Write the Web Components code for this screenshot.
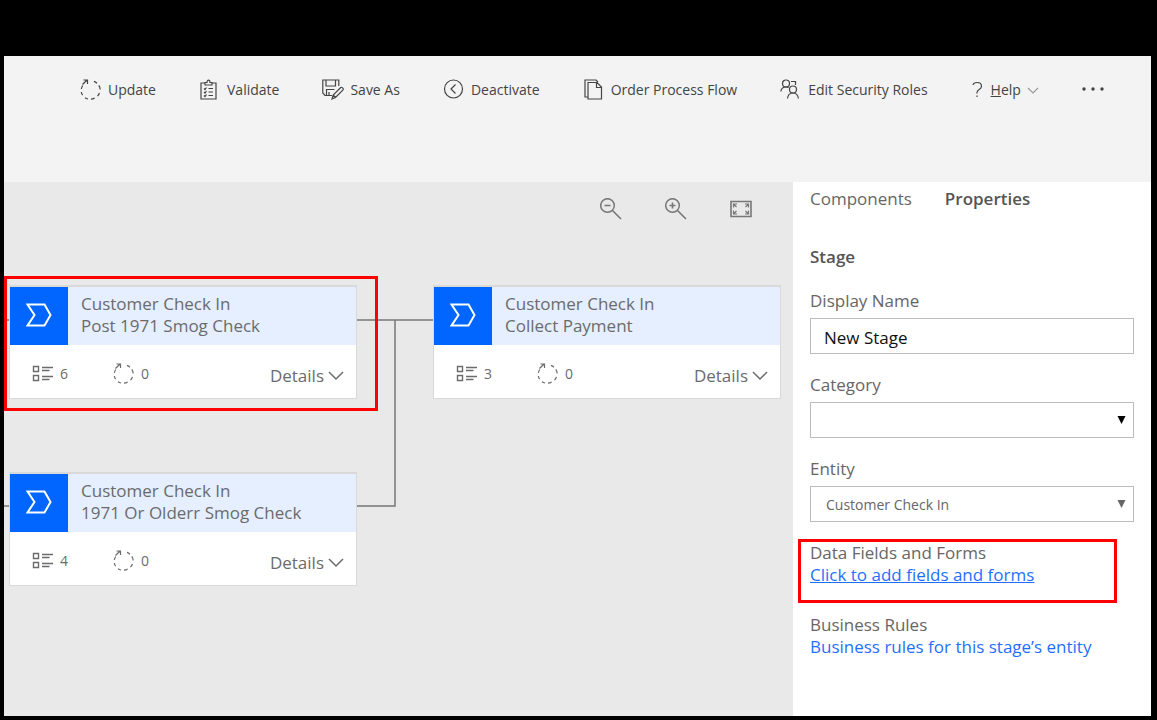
<!DOCTYPE html>
<html lang="en">
<head>
<meta charset="utf-8">
<title>Business process flow designer</title>
<style>
  html, body { margin: 0; height: 100%; }
  body { background: #000; font-family: "Open Sans", "Noto Sans", sans-serif; color: #666; }
</style>
</head>
<body>
<flow-designer>
  <command-bar slot="commands">
    <command-button icon="update">Update</command-button>
    <command-button icon="validate">Validate</command-button>
    <command-button icon="saveas">Save As</command-button>
    <command-button icon="deactivate">Deactivate</command-button>
    <command-button icon="order">Order Process Flow</command-button>
    <command-button icon="roles">Edit Security Roles</command-button>
    <command-button icon="help" menu><u>H</u>elp</command-button>
    <command-button icon="more" label="More commands"></command-button>
  </command-bar>
  <flow-canvas slot="canvas">
    <stage-card style="--x:5px;--y:103px" fields="6" flows="0"><span>Customer Check In</span><span slot="name">Post 1971 Smog Check</span></stage-card>
    <stage-card style="--x:429px;--y:103px" fields="3" flows="0"><span>Customer Check In</span><span slot="name">Collect Payment</span></stage-card>
    <stage-card style="--x:5px;--y:290px" fields="4" flows="0"><span>Customer Check In</span><span slot="name">1971 Or Olderr Smog Check</span></stage-card>
  </flow-canvas>
  <properties-panel slot="panel">
    <form-field label="Display Name" value="New Stage"></form-field>
    <form-field label="Category" type="select" value=""></form-field>
    <form-field label="Entity" type="select" value="Customer Check In" muted></form-field>
    <link-group heading="Data Fields and Forms" highlighted>Click to add fields and forms</link-group>
    <link-group heading="Business Rules">Business rules for this stage’s entity</link-group>
  </properties-panel>
</flow-designer>

<script>
const ICONS = {
  update: [22, 22, '<path d="M2.800 6.500C2 7.600 1.500 9 1.300 10M1.300 13c.2 1.200.7 2.300 1.300 3.200M5 18.700c1 .7 2 1.100 3 1.300M11 20.200c1.300-.1 2.500-.5 3.600-1.100M17.500 17.200c.9-1 1.600-2.200 1.900-3.400M20.200 10.500c-.1-1.500-.6-2.900-1.400-4.100M17 4.300c-1-.9-2-1.500-3-1.900M2.500 5.500L7 1M3.500 1H7.500v4"/>'],
  validate: [22, 22, '<path d="M6 4H2v16h15V4h-4M6 6V3.500h2C8 2 8.600 1.200 9.500 1.200S11 2 11 3.500h2V6zM5 9.500l1 1 1.500-2M5 13l1 1 1.500-2M5 16.500l1 1 1.500-2M9.500 9.500H14M9.500 13H14M9.500 16.500H14"/>'],
  saveas: [22, 22, '<path d="M10 16.500H3L.8 14V1h16v6M4 1v6h9.500V1M4.500 16v-5.500h8M7 13v3.500M10 20l1.200-4 7.500-7.500c1-.8 3.200 1 2.300 2.300L13.500 18.500zM11.200 16l2.300 2.500"/>'],
  deactivate: [22, 22, '<circle cx="10.500" cy="10" r="9"/><path d="M12.500 5.500L8 10l4.500 4.500"/>'],
  order: [22, 22, '<path d="M5 18H2V1h11l2 2M5 3.500h9l4.500 4.500v12H5zM13.500 3.500v5h5"/>'],
  roles: [22, 22, '<circle cx="6" cy="4.500" r="3.500"/><path d="M.8 12.500C1.200 9.800 3.300 8 6 8c1 0 1.800.2 2.600.7M11 2.500h4.500V6"/><circle cx="13" cy="10.500" r="3.500"/><path d="M7.500 19.500c.3-3.300 2.500-5.500 5.500-5.500s5 2.200 5.400 5.500"/>'],
  help: [14, 22, '<path d="M2 6C2.300 4.500 3.800 3.500 6 3.500c2.700 0 4.500 1.300 4.500 3.700 0 3.300-4.500 3.300-4.500 6.300v1"/><path d="M6 16.500v1.500"/>'],
  more: [22, 22, '<g fill="currentColor" stroke="none"><circle cx="2" cy="10" r="1.700"/><circle cx="11" cy="10" r="1.700"/><circle cx="20" cy="10" r="1.700"/></g>'],
  chevsmall: [12, 12, '<path d="M1 4l5 5 5-5"/>'],
  chev: [16, 16, '<path d="M1 4l7 7 7-7" stroke-width="1.500"/>'],
  zoomout: [22, 22, '<circle cx="7.500" cy="7.500" r="6.800" stroke-width="1.500"/><path d="M4.500 7.500h6M12.500 12.500l8.500 8.500" stroke-width="1.600"/>'],
  zoomin: [22, 22, '<circle cx="7.500" cy="7.500" r="6.800" stroke-width="1.500"/><path d="M4.500 7.500h6M7.500 4.500v6M12.500 12.500l8.500 8.500" stroke-width="1.600"/>'],
  fit: [22, 22, '<path d="M1 3.500h20v15H1z" stroke-width="1.600"/><path d="M3.500 9.500V6H7M3.500 6l3 3M18.500 9.500V6H15M18.500 6l-3 3M3.500 12.500V16H7M3.500 16l3-3M18.500 12.500V16H15M18.500 16l-3-3"/>'],
  stage: [26, 24, '<path d="M1.500 1.500h17L24.500 12l-6 10.500h-17L8.500 12z" stroke-width="2"/>'],
  fields: [22, 18, '<path d="M1.500 1.500h5v5h-5zM1.500 10.500h5v5h-5zM10 2.500h11M10 5.500h7.500M10 11.500h11M10 14.500h7.500" stroke-width="1.400"/>'],
};

const define = (name, css, html) => {
  customElements.define(name, class extends HTMLElement {
    constructor() {
      super();
      const root = this.attachShadow({ mode: 'open' });
      const t = document.createElement('template');
      t.innerHTML = `<style>*{box-sizing:border-box}button{font:inherit;color:inherit;background:none;border:0;padding:0;margin:0}${css}</style>` +
        (typeof html === 'function' ? html(this) : html);
      root.append(t.content.cloneNode(true));
    }
  });
};

define('line-icon', ':host{display:block;flex:none}svg{display:block}', el => {
  const [w, h, body] = ICONS[el.getAttribute('name')];
  return `<svg width="${w}" height="${h}" viewBox="0 0 ${w} ${h}" fill="none" stroke="currentColor" stroke-width="1.200" aria-hidden="true">${body}</svg>`;
});

define('command-button', `
  :host{display:block}
  button{display:flex;align-items:center;gap:6px;height:32px;font-size:14px;line-height:20px;color:#444;white-space:nowrap}
  .chev{color:#999}`,
  el => `<button type="button" ${el.getAttribute('label') ? `aria-label="${el.getAttribute('label')}"` : ''}>
    <line-icon name="${el.getAttribute('icon')}"></line-icon>${el.getAttribute('label') ? '' : '<span><slot></slot></span>'}
    ${el.hasAttribute('menu') ? '<line-icon class="chev" name="chevsmall"></line-icon>' : ''}</button>`);

define('command-bar', `
  :host{display:block;background:#f3f3f3;height:126px;box-sizing:border-box;padding:18px 47px 0 76px}
  div{display:flex;justify-content:space-between}`,
  '<div role="toolbar" aria-label="Commands"><slot></slot></div>');

define('stage-card', `
  :host{display:flex;flex-direction:column;position:absolute;left:var(--x);top:var(--y);width:348px;box-sizing:border-box;border:1px solid #d9d9d9;border-top-width:2px;background:#fff;color:#6b6b6b}
  header{display:flex;height:58px;background:#e5efff}
  .badge{width:58px;background:#06f;color:#fff;display:grid;place-items:center;padding-bottom:2px}
  .title{display:flex;flex-direction:column;padding:6px 0 0 13px;font-size:17px;line-height:22px;white-space:nowrap}
  footer{display:flex;align-items:center;height:53px;padding:6px 12px 0 22px;font-size:14px;line-height:20px}
  .count{display:flex;align-items:center;gap:6px;width:81px;padding-bottom:2px}
  button{margin-left:auto;display:flex;align-items:center;gap:4px;font-size:17px;line-height:22px;padding-top:2px}`,
  el => `<header><div class="badge"><line-icon name="stage"></line-icon></div><div class="title"><slot></slot><slot name="name"></slot></div></header>
  <footer><span class="count"><line-icon name="fields"></line-icon>${el.getAttribute('fields')}</span>
  <span class="count"><line-icon name="update"></line-icon>${el.getAttribute('flows')}</span>
  <button type="button">Details<line-icon name="chev"></line-icon></button></footer>`);

define('flow-canvas', `
  :host{display:block;position:relative;background:#e9e9e9;overflow:hidden;height:100%}
  .tools{display:flex;justify-content:flex-end;gap:43px;padding:16px 41px 0 0;color:#777}
  .wires{position:absolute;left:0;top:0;width:100%;height:100%}
  .frame{position:absolute;left:0;top:94px;width:374px;height:135px;border:3px solid #f00;box-sizing:border-box;pointer-events:none}`,
  `<svg class="wires" fill="none" stroke="#777" stroke-width="1.500" aria-hidden="true"><path d="M0 138H5M353 138H429M0 324H5M353 324H391V138"/></svg>
  <div class="tools"><button type="button" aria-label="Zoom out"><line-icon name="zoomout"></line-icon></button>
  <button type="button" aria-label="Zoom in"><line-icon name="zoomin"></line-icon></button>
  <button type="button" aria-label="Fit to screen"><line-icon name="fit"></line-icon></button></div>
  <slot></slot><div class="frame"></div>`);

define('form-field', `
  :host{display:block;margin-bottom:20px}
  label{display:block;margin-bottom:6px}
  .box{position:relative}
  input,select{display:block;width:100%;height:36px;margin:0;border:1px solid #bbb;border-radius:0;background:#fff;font:inherit;color:#111;padding:2px 13px 0;appearance:none;outline:0}
  :host([muted]) select{font-size:14px;color:#666;padding:2px 15px 0}
  svg{position:absolute;right:8px;top:13px;color:#000;pointer-events:none}
  :host([muted]) svg{color:#666}`,
  el => {
    const v = el.getAttribute('value');
    return `<label for="c">${el.getAttribute('label')}</label><div class="box">` +
      (el.getAttribute('type') === 'select'
        ? `<select id="c"><option>${v}</option></select><svg width="9" height="9" aria-hidden="true"><path d="M.5 1h8l-4 8z" fill="currentColor"/></svg>`
        : `<input id="c" type="text" value="${v}">`) + '</div>';
  });

define('link-group', `
  :host{display:block;position:relative;margin-bottom:28px}
  a{color:#1f6fff;text-decoration:none}
  :host([highlighted]) a{text-decoration:underline}
  .frame{display:none}
  :host([highlighted]) .frame{display:block;position:absolute;left:-12px;right:17px;top:-3px;bottom:-17px;border:3px solid #f00;pointer-events:none}`,
  el => `<div>${el.getAttribute('heading')}</div><a href="#"><slot></slot></a><div class="frame"></div>`);

define('properties-panel', `
  :host{display:block;background:#fff;padding:6px 17px 0;font-size:17px;line-height:22px;color:#666;height:100%;box-sizing:border-box}
  nav{display:flex;gap:33px;margin-bottom:36px}
  [aria-selected=true]{font-weight:600;color:#555}
  h2{margin:0 0 22px;font-size:17px;line-height:22px;font-weight:600;color:#555}`,
  `<nav role="tablist"><button type="button" role="tab" aria-selected="false">Components</button><button type="button" role="tab" aria-selected="true">Properties</button></nav>
  <h2>Stage</h2><slot></slot>`);

define('flow-designer', `
  :host{display:grid;box-sizing:border-box;min-height:100vh;padding:56px 6px 4px 4px;background:#000;grid-template-columns:minmax(0,1fr) 358px;grid-template-rows:auto 1fr}
  .top{grid-column:1/-1}`,
  '<div class="top"><slot name="commands"></slot></div><main><slot name="canvas"></slot></main><aside><slot name="panel"></slot></aside>');
</script>
</body>
</html>
